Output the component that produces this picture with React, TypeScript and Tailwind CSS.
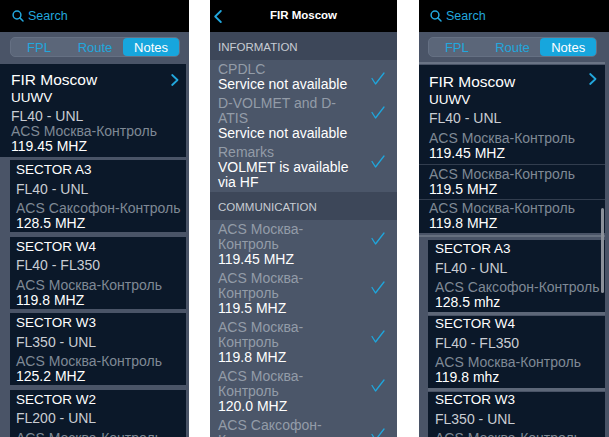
import React from "react";

const FONT = { fontFamily: '"Liberation Sans", Arial, sans-serif' };

function SearchIcon() {
  return (
    <svg width="12" height="12" viewBox="0 0 12 12" fill="none" stroke="#22a7dd" strokeWidth="1.5" strokeLinecap="round">
      <circle cx="5" cy="5" r="3.9" />
      <line x1="7.9" y1="7.9" x2="11" y2="11" />
    </svg>
  );
}

function ChevronRight() {
  return (
    <svg width="8" height="12" viewBox="0 0 8 12" fill="none" stroke="#22a7dd" strokeWidth="1.8" strokeLinecap="round" strokeLinejoin="round">
      <polyline points="1.2,1 6.5,6 1.2,11" />
    </svg>
  );
}

function Check() {
  return (
    <svg width="14" height="13" viewBox="0 0 14 13" fill="none" stroke="#1fa6dc" strokeWidth="1.3" strokeLinecap="round" strokeLinejoin="round">
      <polyline points="1,6.5 4.5,12 13,1" />
    </svg>
  );
}

function SearchHeader({ pl }: { pl: string }) {
  return (
    <div className={`h-[32px] shrink-0 bg-black flex items-center gap-[4px] ${pl}`}>
      <SearchIcon />
      <span className="text-[12.5px] text-[#22a7dd] leading-none">Search</span>
    </div>
  );
}

function Segmented({ w }: { w: string }) {
  return (
    <div className={`${w} h-[20px] rounded-[5px] bg-[#5b6679] border border-[#657083] flex text-[13px] leading-none`}>
      <div className="flex-1 flex items-center justify-center text-[#22a7dd]">FPL</div>
      <div className="flex-1 flex items-center justify-center text-[#22a7dd]">Route</div>
      <div className="flex-1 flex items-center justify-center text-white bg-[#17a6dd] rounded-[4px]">Notes</div>
    </div>
  );
}

function SectorCard({ title, fl, acs, mhz, cls }: { title: string; fl: string; acs: string; mhz: string; cls: string }) {
  return (
    <div className={`bg-[#0b1829] h-[72px] shrink-0 overflow-hidden ${cls}`}>
      <div className="text-[13.5px] leading-[16px] text-white">{title}</div>
      <div className="text-[14px] leading-[16px] mt-[2.5px] text-[#c9cdd3]">{fl}</div>
      <div className="text-[14px] leading-[15px] mt-[4.5px] text-[#7f8995]">{acs}</div>
      <div className="text-[14px] leading-[15px] text-white">{mhz}</div>
    </div>
  );
}

function Panel1() {
  return (
    <div className="w-[189px] h-full bg-[#4a5467] flex flex-col overflow-hidden shrink-0">
      <SearchHeader pl="pl-[12px]" />
      <div className="h-[30px] flex items-center pl-[10px] shrink-0">
        <Segmented w="w-[170px]" />
      </div>
      <div className="h-[2px] shrink-0" />
      <div className="pr-[3px] flex flex-col shrink-0">
        <div className="bg-[#0b1829] h-[93px] relative pl-[11px] pt-[6px] shrink-0">
          <div className="text-[15.5px] leading-[20px] text-white">FIR Moscow</div>
          <div className="text-[13.5px] leading-[15px] text-white">UUWV</div>
          <div className="text-[14px] leading-[15px] mt-[4px] text-[#c9cdd3]">FL40 - UNL</div>
          <div className="text-[14px] leading-[14px] text-[#7f8995]">ACS Москва-Контроль</div>
          <div className="text-[14px] leading-[15px] mt-[1px] text-white">119.45 MHZ</div>
          <div className="absolute right-[7px] top-[10px]">
            <ChevronRight />
          </div>
        </div>
        <div className="flex flex-col gap-[4.5px] mt-[3px] pl-[10px]">
          <SectorCard title="SECTOR A3" fl="FL40 - UNL" acs="ACS Саксофон-Контроль" mhz="128.5 MHZ" cls="pl-[6px] pt-[2px]" />
          <SectorCard title="SECTOR W4" fl="FL40 - FL350" acs="ACS Москва-Контроль" mhz="119.8 MHZ" cls="pl-[6px] pt-[2px]" />
          <SectorCard title="SECTOR W3" fl="FL350 - UNL" acs="ACS Москва-Контроль" mhz="125.2 MHZ" cls="pl-[6px] pt-[2px]" />
          <SectorCard title="SECTOR W2" fl="FL200 - UNL" acs="ACS Москва-Контроль" mhz="125.2 MHZ" cls="pl-[6px] pt-[2px]" />
        </div>
      </div>
    </div>
  );
}

function Band({ text }: { text: string }) {
  return (
    <div className="h-[28px] bg-[#3d4759] flex items-center pt-[3px] pl-[8px] text-[11.5px] text-[#c7ccd3] shrink-0">
      {text}
    </div>
  );
}

function Row({ label, value }: { label: string; value: string }) {
  return (
    <div className="flex py-[2px] pl-[8px] shrink-0">
      <div className="w-[136px] text-[14px] leading-[15px]">
        <div className="text-[#939ca8]">{label}</div>
        <div className="text-white">{value}</div>
      </div>
      <div className="ml-auto mr-[12px] mt-[10px]">
        <Check />
      </div>
    </div>
  );
}

function Panel2() {
  return (
    <div className="w-[187px] h-full bg-[#4b5669] flex flex-col overflow-hidden shrink-0">
      <div className="h-[32px] bg-black relative flex items-center justify-center shrink-0">
        <div className="absolute left-[4px] top-[10px]">
          <svg width="8" height="13" viewBox="0 0 8 13" fill="none" stroke="#22a7dd" strokeWidth="1.8" strokeLinecap="round" strokeLinejoin="round">
            <polyline points="6.8,1 1.2,6.5 6.8,12" />
          </svg>
        </div>
        <span className="text-[11.5px] font-bold text-white">FIR Moscow</span>
      </div>
      <Band text="INFORMATION" />
      <Row label="CPDLC" value="Service not available" />
      <Row label="D-VOLMET and D-ATIS" value="Service not available" />
      <Row label="Remarks" value="VOLMET is available via HF" />
      <Band text="COMMUNICATION" />
      <Row label="ACS Москва-Контроль" value="119.45 MHZ" />
      <Row label="ACS Москва-Контроль" value="119.5 MHZ" />
      <Row label="ACS Москва-Контроль" value="119.8 MHZ" />
      <Row label="ACS Москва-Контроль" value="120.0 MHZ" />
      <Row label="ACS Саксофон-Контроль" value="128.5 MHZ" />
    </div>
  );
}

function Freq({ acs, mhz, cls }: { acs: string; mhz: string; cls: string }) {
  return (
    <div className={cls}>
      <div className="text-[14px] leading-[15px] text-[#7f8995]">{acs}</div>
      <div className="text-[14px] leading-[15px] text-white">{mhz}</div>
    </div>
  );
}

function Panel3() {
  return (
    <div className="w-[190px] h-full bg-[#4a5467] flex flex-col overflow-hidden shrink-0 relative">
      <SearchHeader pl="pl-[11px]" />
      <div className="h-[30px] flex items-center pl-[9px] shrink-0">
        <Segmented w="w-[169px]" />
      </div>
      <div className="h-[2px] bg-[#6a7485] mr-[4px] shrink-0" />
      <div className="h-[1px] shrink-0" />
      <div className="pr-[4px] flex flex-col shrink-0">
        <div className="bg-[#0b1829] h-[168px] relative shrink-0">
          <div className="pl-[10px] pt-[7px] pb-[3px]">
            <div className="text-[15.5px] leading-[20px] text-white">FIR Moscow</div>
            <div className="text-[13.5px] leading-[15px] text-white">UUWV</div>
            <div className="text-[14px] leading-[15px] mt-[4px] text-[#c9cdd3]">FL40 - UNL</div>
            <Freq acs="ACS Москва-Контроль" mhz="119.45 MHZ" cls="mt-[5px]" />
          </div>
          <div className="h-[1px] bg-[#323d4e]" />
          <Freq acs="ACS Москва-Контроль" mhz="119.5 MHZ" cls="pl-[10px] pt-[1.5px] pb-[2px]" />
          <div className="h-[1px] bg-[#323d4e]" />
          <Freq acs="ACS Москва-Контроль" mhz="119.8 MHZ" cls="pl-[10px] pt-[1.5px]" />
          <div className="absolute right-[8px] top-[8px]">
            <ChevronRight />
          </div>
        </div>
        <div className="flex flex-col mt-[2px] pl-[9px]">
          <div className="h-[2px] bg-[#66707f] -ml-[9px]" />
          <div className="h-[3px]" />
          <SectorCard title="SECTOR A3" fl="FL40 - UNL" acs="ACS Саксофон-Контроль" mhz="128.5 mhz" cls="pl-[7px] pt-[1px]" />
          <div className="h-[4px] bg-[#5d6778] border-b border-[#4a5467]" />
          <SectorCard title="SECTOR W4" fl="FL40 - FL350" acs="ACS Москва-Контроль" mhz="119.8 mhz" cls="pl-[7px] pt-[0px]" />
          <div className="h-[4px] bg-[#5d6778] border-b border-[#4a5467]" />
          <SectorCard title="SECTOR W3" fl="FL350 - UNL" acs="ACS Москва-Контроль" mhz="125.2 mhz" cls="pl-[7px] pt-[0px]" />
        </div>
      </div>
      <div className="absolute left-[182px] top-[208px] w-[2.5px] h-[85px] rounded-full bg-[#8a9099]" />
    </div>
  );
}

export default function App() {
  return (
    <div className="w-[609px] h-[437px] bg-white flex overflow-hidden" style={FONT}>
      <Panel1 />
      <div className="w-[21px] shrink-0" />
      <Panel2 />
      <div className="w-[22px] shrink-0" />
      <Panel3 />
    </div>
  );
}
